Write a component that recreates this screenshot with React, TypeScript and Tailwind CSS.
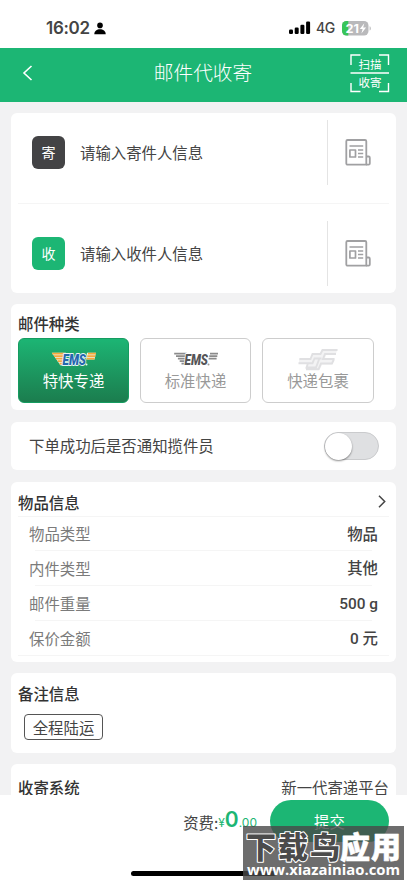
import { ReactNode } from "react";

const contacts = [
  { tag: "寄", placeholder: "请输入寄件人信息", color: "bg-[#434345]", spacing: "pt-[7px] h-[90px]" },
  { tag: "收", placeholder: "请输入收件人信息", color: "bg-[#1cb674]", spacing: "pt-[17px] h-[89px]" },
];

const details = [
  { label: "物品类型", value: "物品" },
  { label: "内件类型", value: "其他" },
  { label: "邮件重量", value: "500 g" },
  { label: "保价金额", value: "0 元" },
];

const PersonIcon = () => (
  <svg width="12" height="13" viewBox="0 0 12 13">
    <circle cx="6" cy="3.4" r="2.8" />
    <path d="M.3 12.2C.3 8.900 3 7.300 6 7.300s5.700 1.600 5.700 4.900z" />
  </svg>
);

const SignalIcon = () => (
  <svg width="22" height="14" viewBox="0 0 22 14">
    <rect x="0" y="8.500" width="4" height="4.500" rx="1.200" />
    <rect x="5.700" y="6.500" width="4" height="6.500" rx="1.200" />
    <rect x="11.400" y="3.800" width="4" height="9.200" rx="1.200" />
    <rect x="17.100" y="0.500" width="4" height="12.500" rx="1.200" />
  </svg>
);

const BatteryIcon = () => (
  <svg width="30" height="15" viewBox="0 0 30 15">
    <defs>
      <clipPath id="battery">
        <rect width="26.500" height="14.500" rx="4.500" />
      </clipPath>
    </defs>
    <g clipPath="url(#battery)">
      <rect width="27" height="15" fill="#b9b9bb" />
      <rect width="6.300" height="15" fill="#37c559" />
    </g>
    <path d="M27.600 5.200c1.600.6 1.600 3.800 0 4.400z" fill="#b9b9bb" />
    <text x="3.600" y="11.700" fill="white" fontSize="12" fontWeight="700" fontFamily="Inter, sans-serif" textLength="13.500" lengthAdjust="spacingAndGlyphs">21</text>
    <path d="M22.300 2.300l-4.500 5.800h2.800l-1.200 4.400 4.700-6h-2.900z" fill="white" />
  </svg>
);

const ScanIcon = () => (
  <svg width="40" height="40" viewBox="0 0 40 40" fill="none" stroke="white" strokeWidth="1.400">
    <path d="M1 11V1h9.500M29 1h9.500v10M1 29v8.500h9.500M29 37.500h9.500V29M.5 19H39" />
    <g fill="white" stroke="none" fontSize="11.500" fontFamily="'Noto Sans CJK SC', sans-serif">
      <text x="8.600" y="14.600">扫描</text>
      <text x="8.600" y="33">收寄</text>
    </g>
  </svg>
);

const AddressBookIcon = () => (
  <svg width="26" height="27" viewBox="0 0 26 27" fill="none" stroke="#a0a0a2" strokeWidth="1.800" strokeLinejoin="round">
    <path d="M21.300 25.700H2.600a1.300 1.300 0 0 1-1.300-1.300V2.300A1.300 1.300 0 0 1 2.600 1h17.400a1.300 1.300 0 0 1 1.300 1.300z" />
    <path d="M21.300 17.500h2.300a1.200 1.200 0 0 1 1.200 1.200v5.800a1.200 1.200 0 0 1-1.200 1.200h-2.300" />
    <path d="M4.500 7h13.700M4.900 11h5.600v7H4.900zM13 11h5.200M13 14.500h5.200M13 18h5.200" strokeWidth="1.700" />
  </svg>
);

const EmsLogo = ({ active = false }) => {
  const wing = active ? "#f6a83c" : "#8b8b8b";
  const gap = active ? "#e9f3e0" : "white";
  const letters = active ? "#2467ae" : "#555557";
  return (
    <svg width="46" height="17" viewBox="0 0 46 17">
      <path d="M.8 1.800H15L12.500 14.500H9.500z" fill={gap} />
      <path d="M36 1.800h9l-1.500 6.800H35z" fill={gap} />
      <g stroke={wing} strokeWidth="1.700">
        <path d="M1.200 2.700h12.500M3 5.200h10M4.900 7.700h7.500M6.700 10.200h5.200M8.500 12.700h3" />
        <path d="M37 2.700h8M36.300 5.200h8M35.600 7.700h8" />
      </g>
      <text
        transform="translate(11.500 14.200)"
        textLength="23.500"
        lengthAdjust="spacingAndGlyphs"
        fontSize="15.500"
        fontWeight="900"
        fontStyle="italic"
        fontFamily="Roboto, sans-serif"
        fill={letters}
        stroke={active ? "#e7f4f4" : "white"}
        strokeWidth="1.800"
        strokeLinejoin="round"
        paintOrder="stroke"
      >
        EMS
      </text>
      <circle cx="35.500" cy="13.500" r="1" fill={active ? "#e7f4f4" : "#999999"} />
    </svg>
  );
};

const PostLogo = () => (
  <svg width="40" height="23" viewBox="0 0 40 23" fill="none">
    <path d="M24 1H39.500L37.500 7H28L27 10H36.500L34 16.500H24L21.500 22H8L9.500 16H1V10.500H12.500L14.500 5.500H22.500z" fill="#f3f3f4" />
    <path d="M39.500 2H24.500L22.500 6H14.500L12.500 11H1.500M38 6H27l-2 5H36.500M.5 15.200h14L16.500 10.500h7M10 15.200l-1.500 4.300h9.500L21.200 11M36 11l-2 4.500H23L20.500 21.300H8" stroke="#e0e0e2" strokeWidth="1.900" />
  </svg>
);

const Card = ({ className, children }: { className: string; children: ReactNode }) => (
  <section className={`mx-[11px] rounded-md bg-white ${className}`}>{children}</section>
);

function StatusBar() {
  return (
    <div className="flex h-12 shrink-0 items-center bg-white pt-2 pl-[46px]">
      <span className="w-[45px] font-['Inter'] text-[17px] leading-5 font-semibold tracking-[-0.3px]">16:02</span>
      <span className="ml-[3px]"><PersonIcon /></span>
      <div className="ml-auto flex items-center pr-[35px]">
        <SignalIcon />
        <span className="ml-[5px] w-[20px] font-['Inter'] text-[14px] leading-5 font-medium tracking-[-0.4px]">4G</span>
        <span className="ml-[6px]"><BatteryIcon /></span>
      </div>
    </div>
  );
}

function Header() {
  return (
    <header className="flex h-[54px] shrink-0 items-center justify-between bg-[#1cb674] pr-[17px] pl-[22px] text-white">
      <svg width="34" height="16" viewBox="0 0 34 16" fill="none" stroke="white" strokeWidth="1.600" className="mt-[-4px]">
        <path d="M9.500 1L2 8l7.500 7" />
      </svg>
      <h1 className="mt-[-6px] text-[19.700px] leading-6 font-light">邮件代收寄</h1>
      <div className="mt-[-2px]"><ScanIcon /></div>
    </header>
  );
}

function Watermark() {
  return (
    <div className="absolute top-[826px] left-[243px] h-[54px] w-[161px] bg-[#484848]/80">
      <svg width="161" height="54" viewBox="0 0 161 54">
        <g fontFamily="'Noto Sans CJK SC', sans-serif" fontWeight="900" fontSize="30" strokeLinejoin="round" paintOrder="stroke">
          <text x="3" y="31.500" textLength="94" fill="#4b4b4b" stroke="white" strokeWidth="2.200">下载鸟</text>
          <text x="97" y="31.500" textLength="61" fill="white" stroke="white" strokeWidth=".6">应用</text>
        </g>
        <text x="4" y="49" textLength="153" lengthAdjust="spacingAndGlyphs" fill="white" fontFamily="'Open Sans', sans-serif" fontWeight="700" fontSize="15">www.xiazainiao.com</text>
      </svg>
    </div>
  );
}

export default function App() {
  return (
    <div className="relative flex h-[883px] w-[407px] flex-col overflow-hidden bg-[#f2f2f3] font-['Noto_Sans_CJK_SC',sans-serif] text-[15.400px] leading-5 text-[#444444]">
      <StatusBar />
      <Header />

      <main className="flex h-[693px] shrink-0 flex-col overflow-hidden pt-[11px]">
        <Card className="h-[180px] shrink-0">
          {contacts.map((contact, index) => (
            <div key={contact.tag}>
              {index > 0 && <div className="mx-[7px] h-px bg-[#f5f5f5]" />}
              <div className={`flex items-start ${contact.spacing}`}>
                <div className="flex h-[65px] w-[317px] items-center border-r border-[#e4e4e4] pl-[21px]">
                  <span className={`flex size-[33px] items-center justify-center rounded-md pb-[2px] text-[14px] text-white ${contact.color}`}>{contact.tag}</span>
                  <span className="mt-[-2px] ml-[15px]">{contact.placeholder}</span>
                </div>
                <div className="flex h-[65px] items-center pl-[17px]"><AddressBookIcon /></div>
              </div>
            </div>
          ))}
        </Card>

        <Card className="mt-[11px] h-[106px] shrink-0 px-[7px] pt-[9px]">
          <h2 className="font-medium text-[#333333]">邮件种类</h2>
          <div className="mt-[5px] flex gap-[11px]">
            <button className="flex h-[65px] w-[111px] flex-col items-center rounded-md border border-[#159c60] bg-linear-to-b from-[#1cb574] to-[#1b7d4e] pt-[12px] text-white">
              <EmsLogo active />
              <span className="mt-[2px]">特快专递</span>
            </button>
            <button className="flex h-[65px] w-[111px] flex-col items-center rounded-md border border-[#cdcdcd] pt-[12px] text-[#999999]">
              <EmsLogo />
              <span className="mt-[2px]">标准快递</span>
            </button>
            <button className="flex h-[65px] w-[112px] flex-col items-center rounded-md border border-[#cdcdcd] pt-[9px] text-[#999999]">
              <PostLogo />
              <span className="mt-[-1px]">快递包裹</span>
            </button>
          </div>
        </Card>

        <Card className="mt-3 flex h-12 shrink-0 items-center justify-between pr-[17px] pl-[18px]">
          <span className="mt-[-2px]">下单成功后是否通知揽件员</span>
          <span className="flex h-[28px] w-[55px] items-center rounded-full border border-[#cacbcd] bg-[#dfe0e2]">
            <span className="size-[27px] rounded-full bg-white shadow-[0_1px_2px_rgba(0,0,0,0.45)]" />
          </span>
        </Card>

        <Card className="mt-3 h-[180px] shrink-0 px-[7px]">
          <div className="flex h-[35px] items-center justify-between border-b border-[#f5f5f5] pt-[5px] pr-[3px]">
            <h2 className="font-medium text-[#333333]">物品信息</h2>
            <svg width="8" height="13" viewBox="0 0 8 13" fill="none" stroke="#444444" strokeWidth="1.500">
              <path d="M1 .8l5.700 5.700L1 12.200" />
            </svg>
          </div>
          {details.map((item, index) => (
            <div key={item.label}>
              <div className={`flex items-center justify-between pr-[11px] pl-[11px] ${index ? "h-[34px]" : "h-[33px]"}`}>
                <span className="mt-[-1px] text-[#7b7b7b]">{item.label}</span>
                <span className="mt-[2px] font-['Roboto','Noto_Sans_CJK_SC',sans-serif] font-medium">{item.value}</span>
              </div>
              <div className={`h-px bg-[#f5f5f5] ${index < 3 ? "mr-[17px] ml-[17px]" : ""}`} />
            </div>
          ))}
        </Card>

        <Card className="mt-[11px] h-[80px] shrink-0 px-[7px] pt-[10px]">
          <h2 className="font-medium text-[#333333]">备注信息</h2>
          <button className="mt-[11px] ml-[6px] flex h-[26px] w-[79px] items-center justify-center rounded border border-[#555555] pb-[1px]">全程陆运</button>
        </Card>

        <Card className="mt-[11px] flex h-[60px] shrink-0 items-start justify-between px-[7px] pt-[13px]">
          <h2 className="font-medium text-[#333333]">收寄系统</h2>
          <span>新一代寄递平台</span>
        </Card>
      </main>

      <footer className="flex h-[88px] flex-col bg-white">
        <div className="flex h-[42px] w-full shrink-0 translate-y-[5px] items-center justify-end pr-[18px]">
          <span className="mt-[2px]">资费:</span>
          <span className="mr-[13px] font-['Inter'] text-[12px] text-[#1cb674]">
            ¥<b className="text-[21px] font-semibold">0</b>.00
          </span>
          <button className="h-[42px] w-[119px] rounded-full bg-[#1cb674] pb-[1px] text-white">提交</button>
        </div>
        <div className="mt-[34px] ml-[131px] h-[5px] w-[145px] rounded-full bg-black" />
      </footer>

      <Watermark />
    </div>
  );
}
